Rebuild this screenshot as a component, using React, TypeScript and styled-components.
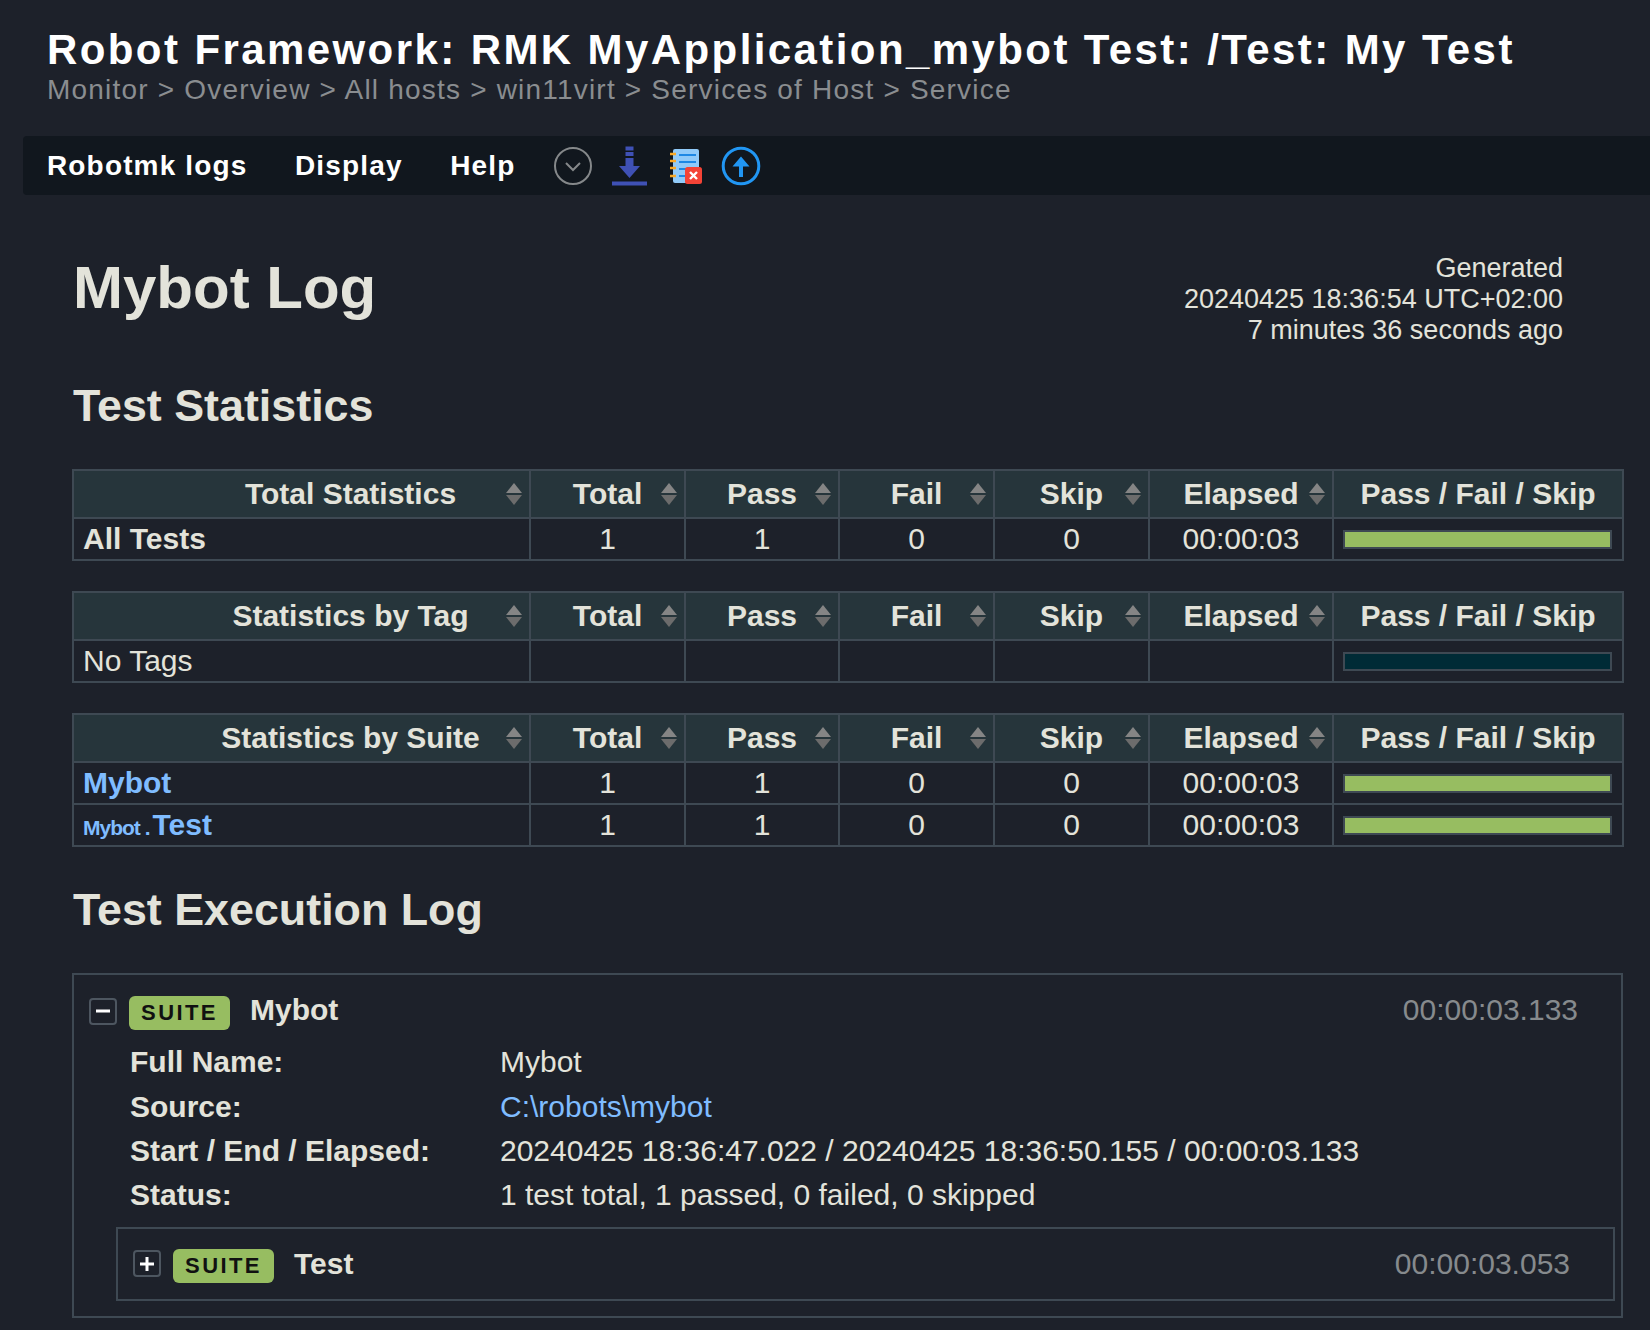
import * as React from 'react';
import styled, { createGlobalStyle } from 'styled-components';

const GlobalStyle = createGlobalStyle`
  html, body {
    margin: 0;
    padding: 0;
    background: #1d212a;
    font-family: "Liberation Sans", Arial, sans-serif;
    color: #e3e3da;
    overflow: hidden;
  }
`;

// ── Header ─────────────────────────────
const Page = styled.div`
  width: 1650px;
  height: 1330px;
  overflow: hidden;
`;

const Header = styled.header`
  padding: 30px 0 0 47px;
`;

const Title = styled.h1`
  margin: 0;
  font-size: 42px;
  line-height: 40px;
  font-weight: bold;
  letter-spacing: 2.41px;
  color: #fff;
  white-space: nowrap;
`;

const Breadcrumb = styled.div`
  margin-top: 2px;
  font-size: 28px;
  line-height: 36px;
  letter-spacing: 1.2px;
  color: #8a8d90;
  white-space: nowrap;
`;

const Toolbar = styled.nav`
  margin: 28px 0 0 23px;
  height: 59px;
  background: #11171e;
  border-radius: 4px 0 0 4px;
  display: flex;
  align-items: center;
  padding-left: 24px;
`;

const MenuItem = styled.span`
  font-size: 28px;
  font-weight: bold;
  letter-spacing: 1.15px;
  color: #fff;
  margin-right: 47.5px;
  white-space: nowrap;
`;

const IconRow = styled.div`
  display: flex;
  align-items: center;
  gap: 16px;
  margin-left: -10px;
`;

const IconBox = styled.svg`
  width: 40px;
  height: 40px;
  display: block;
`;

// ── Content ─────────────────────────────
const Main = styled.main`
  padding: 0 26px 0 72px;
`;

const TopRow = styled.div`
  display: flex;
  justify-content: space-between;
  align-items: flex-start;
  padding: 58px 61px 0 1px;
`;

const LogTitle = styled.h1`
  margin: 0;
  font-size: 60px;
  line-height: 70px;
  font-weight: bold;
`;

const Generated = styled.div`
  font-size: 27px;
  line-height: 31px;
  text-align: right;
`;

const SectionTitle = styled.h2<{ $top: number }>`
  margin: ${({ $top }) => $top}px 0 0 1px;
  font-size: 44.8px;
  line-height: 52px;
  font-weight: bold;
`;

const StatsTable = styled.table<{ $top: number }>`
  margin-top: ${({ $top }) => $top}px;
  width: 1550px;
  table-layout: fixed;
  border-collapse: collapse;
  font-size: 30px;
`;

const Th = styled.th<{ $first?: boolean }>`
  position: relative;
  height: 46px;
  padding: ${({ $first }) => ($first ? '0 10px 0 108px' : '0')};
  background: #26353b;
  border: 2px solid #3e4953;
  font-weight: bold;
  text-align: center;
  white-space: nowrap;
`;

const SortIcon = styled.svg`
  position: absolute;
  right: 6px;
  top: 11px;
  width: 18px;
  height: 24px;
`;

const Td = styled.td<{ $pad?: boolean }>`
  height: 40px;
  padding: 0 ${({ $pad }) => ($pad ? '8px 0 9px' : '0')};
  border: 2px solid #3e4953;
  text-align: ${({ $pad }) => ($pad ? 'left' : 'center')};
  white-space: nowrap;
`;

const RowName = styled.span<{ $bold?: boolean }>`
  font-weight: ${({ $bold }) => ($bold ? 'bold' : 'normal')};
`;

const StatLink = styled.a`
  color: #7fbcff;
  font-weight: bold;
  text-decoration: none;
`;

const ParentName = styled.span`
  font-size: 21px;
  letter-spacing: -1px;
  margin-right: 3px;
`;

const Bar = styled.div<{ $empty?: boolean }>`
  margin: 0 10px 0 9px;
  height: 15px;
  border: 2px solid #3e4953;
  background: ${({ $empty }) => ($empty ? '#002b36' : '#97bd61')};
`;

// ── Log tree ─────────────────────────────
const SuiteBox = styled.section<{ $inner?: boolean }>`
  border: 2px solid #3e4953;
  ${({ $inner }) =>
    $inner
      ? 'margin: 9px 6px 15px 27px; padding: 19px 0 15px 15px;'
      : 'margin-top: 38px; width: 1551px; padding: 20px 0 0 15px; box-sizing: border-box; height: 345px;'}
`;

const SuiteHead = styled.div`
  display: flex;
  align-items: center;
  height: 36px;
  padding-right: 43px;
`;

const Toggle = styled.span`
  width: 28px;
  height: 27px;
  box-sizing: border-box;
  border: 2px solid #4d5660;
  border-radius: 4px;
  display: flex;
  align-items: center;
  justify-content: center;
  color: #fff;
  margin-right: 12px;
  position: relative;
  top: -2px;
`;

const Label = styled.span`
  width: 101px;
  height: 34px;
  background: #97bd61;
  border-radius: 6px;
  color: #111;
  font-size: 22px;
  font-weight: bold;
  letter-spacing: 2.4px;
  display: flex;
  align-items: center;
  justify-content: center;
`;

const SuiteName = styled.span<{ $lift: number }>`
  margin-left: 20px;
  font-size: 30px;
  font-weight: bold;
  position: relative;
  top: ${({ $lift }) => -$lift}px;
`;

const ElapsedTime = styled.span<{ $lift: number }>`
  margin-left: auto;
  font-size: 30px;
  color: #868a8d;
  position: relative;
  top: ${({ $lift }) => -$lift}px;
`;

const Meta = styled.div`
  margin: 9px 0 0 41px;
  display: grid;
  grid-template-columns: 370px 1fr;
  grid-auto-rows: 44.4px;
  align-items: center;
  font-size: 30px;
`;

const MetaKey = styled.span`
  font-weight: bold;
`;

const MetaLink = styled.a`
  color: #7fbcff;
  text-decoration: none;
`;

// ── Icons ─────────────────────────────
const ChevronCircle = () => (
  <IconBox viewBox="0 0 40 40" fill="none">
    <circle cx="20" cy="20" r="18" stroke="#85888a" strokeWidth="2" />
    <path d="M13 17L20 24L27 17" stroke="#85888a" strokeWidth="2" />
  </IconBox>
);

const DownloadIcon = () => (
  <IconBox viewBox="0 0 40 40">
    <g fill="#3f51b5">
      <rect x="16.5" y="0.5" width="8" height="4" />
      <rect x="16.5" y="6" width="8" height="4" />
      <rect x="16.5" y="12" width="8" height="9" />
      <path d="M10 20H31L20.5 32Z" />
      <rect x="3" y="35.5" width="35" height="4" />
    </g>
  </IconBox>
);

const NotebookIcon = () => (
  <IconBox viewBox="-1 0 40 40">
    <rect x="7" y="3" width="26" height="34" rx="2" fill="#90caf9" />
    <g stroke="#1e88e5" strokeWidth="2">
      <path d="M13 9H30M13 16H30M13 23H24M13 30H24" />
    </g>
    <g stroke="#f9a825" strokeWidth="2.5">
      <path d="M4 8H10M4 15H10M4 22H10M4 30H10" />
    </g>
    <rect x="19" y="21" width="17" height="17" rx="2.5" fill="#f44336" />
    <path d="M24 26L31 33M31 26L24 33" stroke="#fff" strokeWidth="2.4" />
  </IconBox>
);

const UpCircle = () => (
  <IconBox viewBox="0 0 40 40" fill="none">
    <circle cx="20" cy="20" r="17.8" stroke="#2196f3" strokeWidth="3" />
    <path d="M18 31V20.5H11.5L20 10.5L28.5 20.5H22V31Z" fill="#2196f3" />
  </IconBox>
);

const Sort = () => (
  <SortIcon viewBox="0 0 18 24">
    <path d="M9 1L17 11H1Z" fill="#858585" />
    <path d="M1 13H17L9 23Z" fill="#6c6c6c" />
  </SortIcon>
);

// ── Data ─────────────────────────────
const widths = [457, 155, 154, 155, 155, 184, 290];
const columns = ['Total', 'Pass', 'Fail', 'Skip', 'Elapsed'];

function Stats({
  title,
  top,
  children,
}: {
  title: string;
  top: number;
  children: React.ReactNode;
}) {
  return (
    <StatsTable $top={top}>
      <colgroup>
        {widths.map((w, i) => (
          <col key={i} style={{ width: w }} />
        ))}
      </colgroup>
      <thead>
        <tr>
          <Th $first>
            {title}
            <Sort />
          </Th>
          {columns.map((c) => (
            <Th key={c}>
              {c}
              <Sort />
            </Th>
          ))}
          <Th>Pass / Fail / Skip</Th>
        </tr>
      </thead>
      <tbody>{children}</tbody>
    </StatsTable>
  );
}

function PassRow({ name }: { name: React.ReactNode }) {
  return (
    <tr>
      <Td $pad>{name}</Td>
      <Td>1</Td>
      <Td>1</Td>
      <Td>0</Td>
      <Td>0</Td>
      <Td>00:00:03</Td>
      <Td>
        <Bar />
      </Td>
    </tr>
  );
}

export default function App(): React.ReactElement {
  return (
    <Page>
      <GlobalStyle />
      <Header>
        <Title>Robot Framework: RMK MyApplication_mybot Test: /Test: My Test</Title>
        <Breadcrumb>Monitor &gt; Overview &gt; All hosts &gt; win11virt &gt; Services of Host &gt; Service</Breadcrumb>
      </Header>
      <Toolbar>
        <MenuItem>Robotmk logs</MenuItem>
        <MenuItem>Display</MenuItem>
        <MenuItem>Help</MenuItem>
        <IconRow>
          <ChevronCircle />
          <DownloadIcon />
          <NotebookIcon />
          <UpCircle />
        </IconRow>
      </Toolbar>
      <Main>
        <TopRow>
          <LogTitle>Mybot Log</LogTitle>
          <Generated>
            Generated
            <br />
            20240425 18:36:54 UTC+02:00
            <br />
            7 minutes 36 seconds ago
          </Generated>
        </TopRow>
        <SectionTitle $top={33}>Test Statistics</SectionTitle>
        <Stats title="Total Statistics" top={38}>
          <PassRow name={<RowName $bold>All Tests</RowName>} />
        </Stats>
        <Stats title="Statistics by Tag" top={30}>
          <tr>
            <Td $pad>
              <RowName>No Tags</RowName>
            </Td>
            <Td />
            <Td />
            <Td />
            <Td />
            <Td />
            <Td>
              <Bar $empty />
            </Td>
          </tr>
        </Stats>
        <Stats title="Statistics by Suite" top={30}>
          <PassRow name={<StatLink>Mybot</StatLink>} />
          <PassRow
            name={
              <StatLink>
                <ParentName>Mybot .</ParentName>Test
              </StatLink>
            }
          />
        </Stats>
        <SectionTitle $top={36}>Test Execution Log</SectionTitle>
        <SuiteBox>
          <SuiteHead>
            <Toggle>
              <svg width="14" height="14" viewBox="0 0 14 14">
                <rect x="0" y="5.5" width="14" height="3" fill="#fff" />
              </svg>
            </Toggle>
            <Label>SUITE</Label>
            <SuiteName $lift={3}>Mybot</SuiteName>
            <ElapsedTime $lift={3}>00:00:03.133</ElapsedTime>
          </SuiteHead>
          <Meta>
            <MetaKey>Full Name:</MetaKey>
            <span>Mybot</span>
            <MetaKey>Source:</MetaKey>
            <MetaLink>C:\robots\mybot</MetaLink>
            <MetaKey>Start / End / Elapsed:</MetaKey>
            <span>20240425 18:36:47.022 / 20240425 18:36:50.155 / 00:00:03.133</span>
            <MetaKey>Status:</MetaKey>
            <span>1 test total, 1 passed, 0 failed, 0 skipped</span>
          </Meta>
          <SuiteBox $inner>
            <SuiteHead>
              <Toggle>
                <svg width="14" height="14" viewBox="0 0 14 14">
                  <path d="M5.5 0H8.5V5.5H14V8.5H8.5V14H5.5V8.5H0V5.5H5.5Z" fill="#fff" />
                </svg>
              </Toggle>
              <Label>SUITE</Label>
              <SuiteName $lift={2}>Test</SuiteName>
              <ElapsedTime $lift={2}>00:00:03.053</ElapsedTime>
            </SuiteHead>
          </SuiteBox>
        </SuiteBox>
      </Main>
    </Page>
  );
}
